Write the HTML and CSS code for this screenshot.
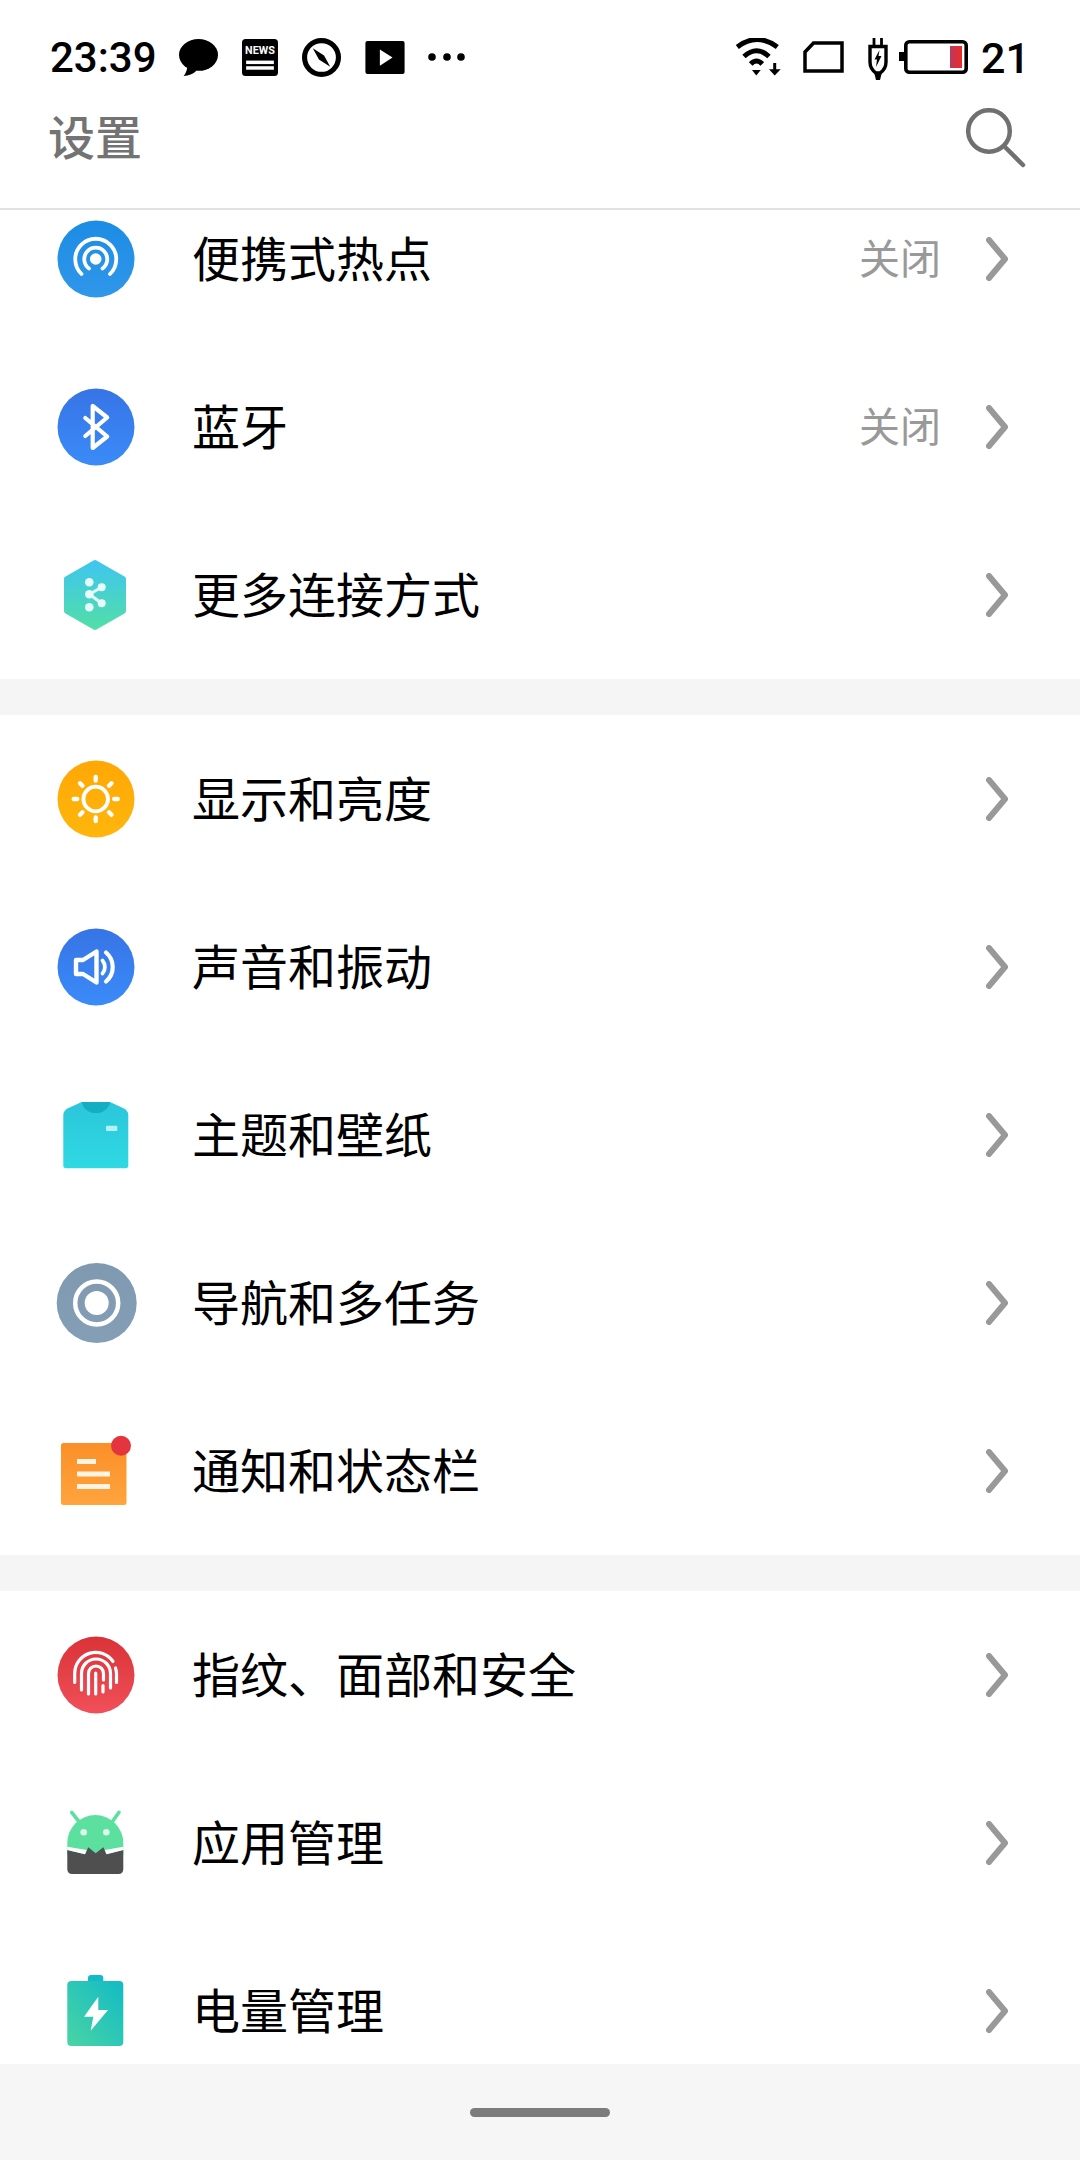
FILE: index.html
```html
<!DOCTYPE html>
<html lang="zh-CN">
<head>
<meta charset="utf-8">
<title>设置</title>
<link rel="stylesheet" href="styles.css">
</head>
<body>
<div class="page">
  <header class="header">
    <div class="status">
      <div class="status-group">
        <span class="clock">23:39</span>
        <svg class="si" width="39" height="37" viewBox="0 0 38 36"><ellipse cx="19" cy="15.500" rx="19" ry="15.500"/><path d="M8 26 Q8 32 4.500 36 Q12 36 17 31Z"/></svg>
        <svg class="si" width="36" height="37" viewBox="0 0 35 36"><rect width="35" height="36" rx="3.500"/><text class="news" x="17.500" y="15" text-anchor="middle">NEWS</text><rect class="wf" x="4" y="21" width="27" height="3.400"/><rect class="wf" x="4" y="26.500" width="27" height="3.400"/></svg>
        <svg class="si" width="39" height="39" viewBox="0 0 38 38"><circle class="sk" cx="19" cy="19" r="16.500" stroke-width="5"/><path d="M10.500 10 L21.500 17 L27.500 28 L16.500 21Z"/></svg>
        <svg class="si" width="40" height="33" viewBox="0 0 38 32"><rect width="38" height="32" rx="2"/><path class="wf" d="M14 8.300 L26.300 16 L14 24Z"/></svg>
        <svg class="si dots" width="38" height="10" viewBox="0 0 38 10"><circle cx="4" cy="5" r="3.800"/><circle cx="19" cy="5" r="3.800"/><circle cx="33" cy="5" r="3.800"/></svg>
      </div>
      <div class="status-group right">
        <svg class="si" width="48" height="38" viewBox="0 0 48 38"><path class="sk" stroke-width="5" d="M3.300 9 Q23 -6 43.300 9"/><path class="sk" stroke-width="5" d="M10 18.500 Q22.500 7 35 18.500"/><path class="sk" stroke-width="5" d="M16.700 26 Q22.500 20 28.300 26"/><path d="M18 32 H26.700 L22.300 37.500Z"/><path class="sk" stroke-width="3" d="M40.700 25 V33"/><path d="M35 31.300 H46.700 L40.700 37.500Z"/></svg>
        <svg class="si sim" width="41" height="32" viewBox="0 0 41 32"><path class="sk" stroke-width="3.500" d="M2 30 V11 L10.500 2 H39 V30Z"/></svg>
        <svg class="si plug" width="20" height="46" viewBox="0 -4 20 46"><path class="sk" stroke-width="2.800" d="M6 0 V9 M13.500 0 V9"/><path class="sk" stroke-width="3.400" d="M2 8.500 H18 V24 Q18 31 12 35 H8 Q2 31 2 24Z"/><path d="M6 34 H14 L12 42 H8Z"/><path d="M11.500 12 L6.500 21.500 H9 L8 29 L13.500 18 H10.500Z"/></svg>
        <svg class="si batt" width="69" height="38" viewBox="0 -2 69 38">
          <defs><linearGradient id="bt"><stop offset="0" stop-color="#b93a5c"/><stop offset="1" stop-color="#ef2a2a"/></linearGradient></defs>
          <rect x="0" y="12" width="6" height="9"/>
          <rect class="sk" x="6.800" y="1.800" width="60.400" height="30.400" rx="3.500" stroke-width="3.600"/>
          <rect x="51" y="6" width="12" height="22" fill="url(#bt)"/>
        </svg>
        <span class="level">21</span>
      </div>
    </div>
    <div class="titlebar">
      <h1 class="title">设置</h1>
      <svg class="search" width="60" height="60" viewBox="0 0 60 60"><circle cx="23" cy="23" r="20.800"/><path d="M39 39 L57 57"/></svg>
    </div>
  </header>

  <main class="scroller">
    <div class="list">
      <section class="group">
        <div class="row">
          <svg class="ic" width="80" height="80" viewBox="0 0 80 80">
            <defs><linearGradient id="g1" x1="0" y1="0" x2="0" y2="1"><stop offset="0" stop-color="#1c8ce4"/><stop offset="1" stop-color="#3097ea"/></linearGradient></defs>
            <circle cx="40" cy="40" r="38.500" fill="url(#g1)"/>
            <g class="w-line" stroke-width="3.800"><path d="M25.500 55 A20.500 20.500 0 1 1 54 55"/><path d="M33 49.500 A11.500 11.500 0 1 1 46.500 49.500"/></g>
            <circle class="wf" cx="39.700" cy="40" r="5.800"/>
          </svg>
          <span class="label">便携式热点</span><span class="value">关闭</span>
          <svg class="chev" width="22" height="44" viewBox="0 0 22 44"><path d="M3 3 L19 22 L3 41"/></svg>
        </div>
        <div class="row">
          <svg class="ic" width="80" height="80" viewBox="0 0 80 80">
            <defs><linearGradient id="g2" x1="0" y1="0" x2="0" y2="1"><stop offset="0" stop-color="#3774e6"/><stop offset="1" stop-color="#3a8bf8"/></linearGradient></defs>
            <circle cx="40" cy="40" r="38.500" fill="url(#g2)"/>
            <path class="w-line" stroke-width="4.200" d="M29.300 49 L51.200 30.500 L36.700 19 V61 L51.200 49.500 L29.300 31"/>
          </svg>
          <span class="label">蓝牙</span><span class="value">关闭</span>
          <svg class="chev" width="22" height="44" viewBox="0 0 22 44"><path d="M3 3 L19 22 L3 41"/></svg>
        </div>
        <div class="row">
          <svg class="ic" width="80" height="80" viewBox="0 0 80 80">
            <defs><linearGradient id="g3" gradientUnits="userSpaceOnUse" x1="0" y1="5" x2="0" y2="75"><stop offset="0" stop-color="#3ec5f0"/><stop offset="1" stop-color="#52dfa6"/></linearGradient></defs>
            <path fill="url(#g3)" stroke="url(#g3)" stroke-width="6" stroke-linejoin="round" d="M39 8 L67 24 V56 L39 72 L11 56 V24Z"/>
            <path class="p-line" stroke-width="3" d="M45.700 32.300 L33.300 39.300 L45.700 48.300"/>
            <g class="pale"><circle cx="33.300" cy="27.300" r="4.300"/><circle cx="45.700" cy="32.300" r="4"/><circle cx="33.300" cy="39.300" r="4.300"/><circle cx="45.700" cy="48.300" r="4"/><circle cx="33.300" cy="52.300" r="4.300"/></g>
          </svg>
          <span class="label">更多连接方式</span>
          <svg class="chev" width="22" height="44" viewBox="0 0 22 44"><path d="M3 3 L19 22 L3 41"/></svg>
        </div>
      </section>

      <section class="group">
        <div class="row">
          <svg class="ic" width="80" height="80" viewBox="0 0 80 80">
            <defs><linearGradient id="g4" x1="0" y1="0" x2="0" y2="1"><stop offset="0" stop-color="#ffa705"/><stop offset="1" stop-color="#ffb60c"/></linearGradient></defs>
            <circle cx="40" cy="40" r="38.500" fill="url(#g4)"/>
            <circle cx="39.700" cy="40" r="12.300" fill="none" stroke="#fff" stroke-width="3.800"/>
            <path class="w-line" stroke-width="4.400" d="M39.700 18 V21.500 M39.700 58.500 V62 M17.700 40 H21.200 M58.200 40 H61.700 M24 24.300 L26.500 26.800 M53 53.300 L55.500 55.800 M24 55.800 L26.500 53.300 M53 26.800 L55.500 24.300"/>
          </svg>
          <span class="label">显示和亮度</span>
          <svg class="chev" width="22" height="44" viewBox="0 0 22 44"><path d="M3 3 L19 22 L3 41"/></svg>
        </div>
        <div class="row">
          <svg class="ic" width="80" height="80" viewBox="0 0 80 80">
            <circle cx="40" cy="40" r="38.500" fill="url(#g2)"/>
            <path class="w-line" stroke-width="4.400" d="M20 33 H27 L40.500 24.500 V55.500 L27 47 H20Z"/>
            <path class="w-line" stroke-width="3.800" d="M46.500 33.500 A10 10 0 0 1 46.500 46.500"/>
            <path class="w-line" stroke-width="4.200" d="M50 25.500 A19 19 0 0 1 50 54.500"/>
          </svg>
          <span class="label">声音和振动</span>
          <svg class="chev" width="22" height="44" viewBox="0 0 22 44"><path d="M3 3 L19 22 L3 41"/></svg>
        </div>
        <div class="row">
          <svg class="ic" width="80" height="80" viewBox="0 0 80 80">
            <defs><linearGradient id="g5" x1="0" y1="0" x2="0" y2="1"><stop offset="0" stop-color="#2bc6da"/><stop offset="1" stop-color="#2fd9e3"/></linearGradient></defs>
            <path fill="url(#g5)" d="M25.700 7 H54 L68 13.500 Q72.300 16 72.300 20 V70.500 Q72.300 73.300 69.500 73.300 H10 Q7.300 73.300 7.300 70.500 V20 Q7.300 16 11.500 13.500Z"/>
            <path fill="#13aec2" d="M25.700 7 H54 A14.300 13 0 0 1 25.700 7Z"/>
            <rect x="50" y="30.700" width="11.300" height="5.300" rx="1" fill="#b5f0f5"/>
          </svg>
          <span class="label">主题和壁纸</span>
          <svg class="chev" width="22" height="44" viewBox="0 0 22 44"><path d="M3 3 L19 22 L3 41"/></svg>
        </div>
        <div class="row">
          <svg class="ic" width="82" height="80" viewBox="0 0 82 80">
            <defs><linearGradient id="g6" x1="0" y1="0" x2="0" y2="1"><stop offset="0" stop-color="#7f99b0"/><stop offset="1" stop-color="#849eb6"/></linearGradient></defs>
            <circle cx="40.700" cy="40" r="40" fill="url(#g6)"/>
            <circle cx="40.700" cy="40" r="21.500" fill="none" stroke="#fff" stroke-width="4.500"/>
            <circle class="wf" cx="40.700" cy="40" r="12"/>
          </svg>
          <span class="label shift">导航和多任务</span>
          <svg class="chev" width="22" height="44" viewBox="0 0 22 44"><path d="M3 3 L19 22 L3 41"/></svg>
        </div>
        <div class="row">
          <svg class="ic" width="80" height="80" viewBox="0 0 80 80">
            <defs><linearGradient id="g7" x1="0" y1="0" x2="0" y2="1"><stop offset="0" stop-color="#fb8f28"/><stop offset="1" stop-color="#ffa43e"/></linearGradient></defs>
            <rect x="5" y="12" width="65.500" height="62" rx="2.500" fill="url(#g7)"/>
            <rect x="21" y="28" width="19" height="5" fill="#fff4e2"/>
            <rect x="21" y="40.500" width="33" height="5" fill="#fff4e2"/>
            <rect x="21" y="53" width="33" height="5" fill="#fff4e2"/>
            <circle cx="65" cy="14.700" r="10" fill="#e4353f"/>
          </svg>
          <span class="label">通知和状态栏</span>
          <svg class="chev" width="22" height="44" viewBox="0 0 22 44"><path d="M3 3 L19 22 L3 41"/></svg>
        </div>
      </section>

      <section class="group">
        <div class="row">
          <svg class="ic" width="80" height="80" viewBox="0 0 80 80">
            <defs><linearGradient id="g8" x1="0" y1="0" x2="0" y2="1"><stop offset="0" stop-color="#da3237"/><stop offset="1" stop-color="#f0505a"/></linearGradient></defs>
            <circle cx="40" cy="40" r="38.500" fill="url(#g8)"/>
            <g class="w-line" stroke-width="3.200">
              <path d="M18.700 47.500 V38.500 A21 21 0 0 1 57 26.500"/>
              <path d="M60.500 47.500 V38.500 A21 21 0 0 0 59.500 33"/>
              <path d="M25.500 55 V38.500 A14.500 14.500 0 0 1 54.500 38.500 V53"/>
              <path d="M32.500 59 V38.500 A7.500 7.500 0 0 1 47.500 38.500 V45"/>
              <path d="M39.700 38 V59"/>
              <path d="M47 50.500 V57"/>
            </g>
          </svg>
          <span class="label">指纹、面部和安全</span>
          <svg class="chev" width="22" height="44" viewBox="0 0 22 44"><path d="M3 3 L19 22 L3 41"/></svg>
        </div>
        <div class="row">
          <svg class="ic" width="80" height="80" viewBox="0 0 80 80">
            <path class="g-line" stroke-width="3.600" d="M15.700 9.300 L23 18.700 M63 9.300 L56.300 18.700"/>
            <path fill="#5ce0a0" d="M11.300 52 V40 A28 28 0 0 1 67.300 40 V52Z"/>
            <circle cx="27.700" cy="29.300" r="3.300" fill="#dcf9ea"/>
            <circle cx="50.300" cy="29.300" r="3.300" fill="#dcf9ea"/>
            <path fill="#4f4f4f" d="M11.300 47 L29 51.300 L32.300 44.300 L39.700 50.300 L47.300 44.300 L50.500 51.300 L67.300 47 V66 Q67.300 71 62.300 71 H16.300 Q11.300 71 11.300 66Z"/>
            <path class="wf" d="M11.300 43.700 L30.700 47 L29 51.300 L11.300 47Z M67.300 43.700 L48.800 47 L50.500 51.300 L67.300 47Z"/>
          </svg>
          <span class="label">应用管理</span>
          <svg class="chev" width="22" height="44" viewBox="0 0 22 44"><path d="M3 3 L19 22 L3 41"/></svg>
        </div>
        <div class="row">
          <svg class="ic" width="80" height="80" viewBox="0 0 80 80">
            <defs><linearGradient id="g9" x1="1" y1="0" x2="0" y2="1"><stop offset="0" stop-color="#12bbc6"/><stop offset="1" stop-color="#4ad4a4"/></linearGradient></defs>
            <path fill="#14bbc4" d="M32 10 V7 Q32 4 35 4 H44.300 Q47.300 4 47.300 7 V10Z"/>
            <rect x="11.300" y="10" width="56" height="65" rx="4" fill="url(#g9)"/>
            <path class="wf" d="M42.300 25.700 L28 45.700 H37.300 L34.700 59.700 L52 39 H42.300Z"/>
          </svg>
          <span class="label">电量管理</span>
          <svg class="chev" width="22" height="44" viewBox="0 0 22 44"><path d="M3 3 L19 22 L3 41"/></svg>
        </div>
      </section>
    </div>
  </main>

  <footer class="navbar"><span class="pill"></span></footer>
</div>
</body>
</html>
```

FILE: styles.css
```css
* { box-sizing: border-box; }
html, body { margin: 0; padding: 0; background: #fff; }
body { font-family: "Noto Sans CJK SC", "Noto Sans", sans-serif; color: #000; }

.page { width: 1080px; height: 2160px; display: flex; flex-direction: column; overflow: hidden; }

.header { flex: none; height: 210px; padding-top: 30px; border-bottom: 2px solid #e2e2e2; background: #fff; position: relative; z-index: 1; }
.status { height: 54px; padding: 0 50px 0 50px; display: flex; justify-content: space-between; align-items: center; }
.status-group { display: flex; align-items: center; gap: 24px; }
.status-group.right { gap: 21px; }
.clock, .level { font-family: Roboto, "Liberation Sans", sans-serif; font-weight: 500; font-size: 43px; line-height: 54px; padding-top: 2px; }
.clock { font-size: 42px; margin-right: -2px; }
.si { display: block; flex: none; fill: #000; }
.sk { fill: none; stroke: #000; stroke-linejoin: miter; }
.wf { fill: #fff; }
.pale { fill: #e6fbfa; }
.p-line { fill: none; stroke: #e6fbfa; stroke-linecap: round; stroke-linejoin: round; }
.news { font-family: Roboto, sans-serif; font-weight: 700; font-size: 10.500px; fill: #fff; }
.status-group .dots { margin-left: -1px; }
.status-group .plug { margin-left: 3px; margin-right: -3px; }
.status-group .batt { margin-left: -7px; }
.status-group .level { margin-left: -8px; }

.titlebar { height: 108px; padding: 0 54px 0 48px; display: flex; justify-content: space-between; align-items: center; }
.title { margin: 0; padding-bottom: 6px; font-size: 47px; font-weight: 500; line-height: 60px; color: #737373; }
.search { display: block; fill: none; stroke: #707070; stroke-width: 4.500px; stroke-linecap: round; }

.scroller { flex: 1; min-height: 0; overflow: hidden; background: #f5f5f5; }
.list { margin-top: -35px; display: flex; flex-direction: column; gap: 36px; }
.group { background: #fff; display: flex; flex-direction: column; }

.row { height: 168px; padding: 0 72px 0 56px; display: flex; align-items: center; }
.ic { display: block; flex: none; margin-right: 56px; overflow: visible; }
.label { flex: 1; padding-bottom: 6px; font-size: 48px; line-height: 64px; color: #000; }
.label.shift { margin-left: -2px; }
.value { padding-bottom: 6px; font-size: 41px; line-height: 56px; color: #999; margin-right: 45px; }
.chev { display: block; flex: none; fill: none; stroke: #999; stroke-width: 6px; stroke-linecap: round; stroke-linejoin: round; }

.w-line { fill: none; stroke: #fff; stroke-linecap: round; stroke-linejoin: round; }
.g-line { fill: none; stroke: #5ce0a0; stroke-linecap: round; }

.navbar { flex: none; height: 96px; background: #f6f6f6; display: flex; align-items: center; justify-content: center; position: relative; z-index: 1; }
.pill { display: block; width: 140px; height: 9px; border-radius: 5px; background: #7c7c7c; }
```
